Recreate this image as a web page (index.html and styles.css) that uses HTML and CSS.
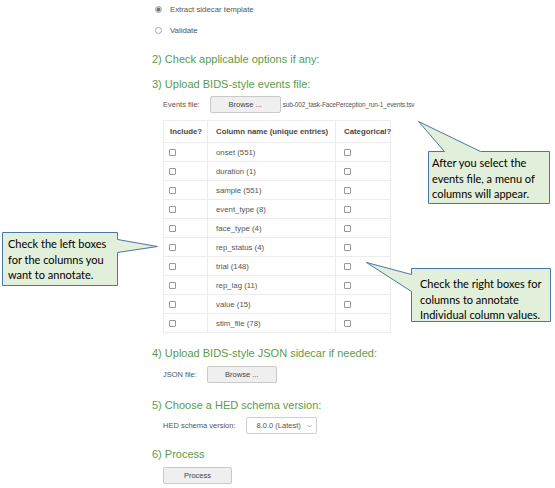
FILE: index.html
```html
<!DOCTYPE html>
<html lang="en">
<head>
<meta charset="utf-8">
<title>BIDS sidecar</title>
<link rel="stylesheet" href="styles.css">
</head>
<body>
<div class="page">
  <div class="radios">
    <div class="radio-row"><span class="radio checked"></span>Extract sidecar template</div>
    <div class="radio-row"><span class="radio"></span>Validate</div>
  </div>

  <h3 class="step">2) Check applicable options if any:</h3>

  <h3 class="step">3) Upload BIDS-style events file:</h3>
  <div class="field">
    <span class="label">Events file:</span>
    <span class="btn browse">Browse ...</span>
    <span class="filename">sub-002_task-FacePerception_run-1_events.tsv</span>
  </div>

  <table class="cols">
    <colgroup><col class="k1"><col class="k2"><col class="k3"></colgroup>
    <thead>
      <tr><th>Include?</th><th>Column name (unique entries)</th><th>Categorical?</th></tr>
    </thead>
    <tbody>
      <tr><td><span class="cb"></span></td><td>onset (551)</td><td><span class="cb"></span></td></tr>
      <tr><td><span class="cb"></span></td><td>duration (1)</td><td><span class="cb"></span></td></tr>
      <tr><td><span class="cb"></span></td><td>sample (551)</td><td><span class="cb"></span></td></tr>
      <tr><td><span class="cb"></span></td><td>event_type (8)</td><td><span class="cb"></span></td></tr>
      <tr><td><span class="cb"></span></td><td>face_type (4)</td><td><span class="cb"></span></td></tr>
      <tr><td><span class="cb"></span></td><td>rep_status (4)</td><td><span class="cb"></span></td></tr>
      <tr><td><span class="cb"></span></td><td>trial (148)</td><td><span class="cb"></span></td></tr>
      <tr><td><span class="cb"></span></td><td>rep_lag (11)</td><td><span class="cb"></span></td></tr>
      <tr><td><span class="cb"></span></td><td>value (15)</td><td><span class="cb"></span></td></tr>
      <tr><td><span class="cb"></span></td><td>stim_file (78)</td><td><span class="cb"></span></td></tr>
    </tbody>
  </table>

  <h3 class="step s4">4) Upload BIDS-style JSON sidecar if needed:</h3>
  <div class="field f-json">
    <span class="label">JSON file:</span>
    <span class="btn browse-json">Browse ...</span>
  </div>

  <h3 class="step s5">5) Choose a HED schema version:</h3>
  <div class="field">
    <span class="label">HED schema version:</span>
    <span class="select">8.0.0 (Latest)<svg class="chev" width="5" height="4" viewBox="0 0 5 4"><path d="M0.5 1 L2.5 3 L4.5 1" fill="none" stroke="#999" stroke-width="0.8"/></svg></span>
  </div>

  <h3 class="step s6">6) Process</h3>
  <div class="field f-process">
    <span class="btn process">Process</span>
  </div>
</div>

<svg class="callouts" width="555" height="488" viewBox="0 0 555 488">
  <path d="M428.5,151.5 H444.5 L418.5,121.5 L480.5,151.5 H549.5 V203.5 H428.5 Z"/>
  <path d="M2.5,232.5 H117.5 V239.5 L157.5,246.5 L117.5,252.5 V285.5 H2.5 Z"/>
  <path d="M411.5,268.5 H550.5 V321.5 H411.5 V291.5 L366.5,262.5 L411.5,274.5 Z"/>
</svg>
<p class="note n1">After you select the<br>events file, a menu of<br>columns will appear.</p>
<p class="note n2">Check the left boxes<br>for the columns you<br>want to annotate.</p>
<p class="note n3">Check the right boxes for<br>columns to annotate<br>Individual column values.</p>
</body>
</html>
```

FILE: styles.css
```css
html, body {
  margin: 0;
  padding: 0;
}
body {
  width: 555px;
  height: 488px;
  overflow: hidden;
  position: relative;
  background: #fff;
  font-family: "Liberation Sans", Arial, sans-serif;
  color: #555;
}
.page {
  padding-left: 152px;
}
.radios {
  margin-top: -1px;
}
.radio-row {
  display: flex;
  align-items: center;
  height: 21px;
  font-size: 7.8px;
  color: #555;
}
.radio {
  width: 5px;
  height: 5px;
  border: 1px solid #a8a8a8;
  border-radius: 50%;
  margin-left: 3px;
  margin-right: 8px;
  background: #fff;
}
.radio.checked {
  background: radial-gradient(circle, #777 0, #777 1.6px, #cfcfcf 2.2px);
}
.step {
  margin: 11px 0 0;
  font-size: 11px;
  line-height: 14px;
  font-weight: normal;
  color: #5b9c4a;
}
.step.s4 { margin-top: 13px; }
.step.s5 { margin-top: 15px; }
.step.s6 { margin-top: 13px; }

.field {
  display: flex;
  align-items: center;
  height: 17px;
  margin: 5px 0 0 11px;
  font-size: 7.5px;
  color: #555;
}
.field.f-json,
.field.f-process { margin-top: 6px; }
.label {
  margin-right: 10px;
}
.btn {
  display: inline-flex;
  align-items: center;
  justify-content: center;
  box-sizing: border-box;
  height: 17px;
  border: 1px solid #c9c9c9;
  border-radius: 2px;
  background: #efefef;
  color: #444;
  font-size: 7.5px;
}
.browse { width: 71px; }
.browse-json { width: 70px; }
.process { width: 69px; }
.filename {
  margin-left: 2px;
  font-size: 6.5px;
  letter-spacing: -0.15px;
}
.select {
  position: relative;
  display: inline-flex;
  align-items: center;
  box-sizing: border-box;
  width: 71px;
  height: 17px;
  padding-left: 10px;
  border: 1px solid #cfcfcf;
  border-radius: 2px;
  background: #fff;
  color: #555;
}
.chev {
  margin-left: auto;
  margin-right: 4px;
}

.cols {
  margin: 7px 0 0 11px;
  border-collapse: collapse;
  table-layout: fixed;
  width: 227px;
  font-size: 7.8px;
  color: #555;
}
.cols col.k1 { width: 44px; }
.cols col.k2 { width: 128px; }
.cols col.k3 { width: 55px; }
.cols th,
.cols td {
  border: 1px solid #ececec;
  padding: 0 0 0 8px;
  text-align: left;
  vertical-align: middle;
  white-space: nowrap;
}
.cols th {
  height: 21px;
  font-size: 7.8px;
  font-weight: bold;
  color: #484848;
}
.cols td {
  height: 18px;
}
.cols th:first-child { padding-left: 6px; }
.cols td:first-child { padding-left: 5px; }
.cb {
  display: block;
  width: 5px;
  height: 5px;
  border: 1px solid #999;
  border-radius: 1px;
  background: #fff;
}

.callouts {
  position: absolute;
  left: 0;
  top: 0;
  pointer-events: none;
}
.callouts path {
  fill: #e2efda;
  stroke: #4a76a8;
  stroke-width: 1;
}
.note {
  position: absolute;
  margin: 0;
  font-family: Lato, "Open Sans", sans-serif;
  font-size: 11px;
  line-height: 15.5px;
  color: #000;
  white-space: nowrap;
}
.n1 { left: 432px; top: 155px; }
.n2 { left: 8px; top: 236px; }
.n3 { left: 420px; top: 276px; }
```
